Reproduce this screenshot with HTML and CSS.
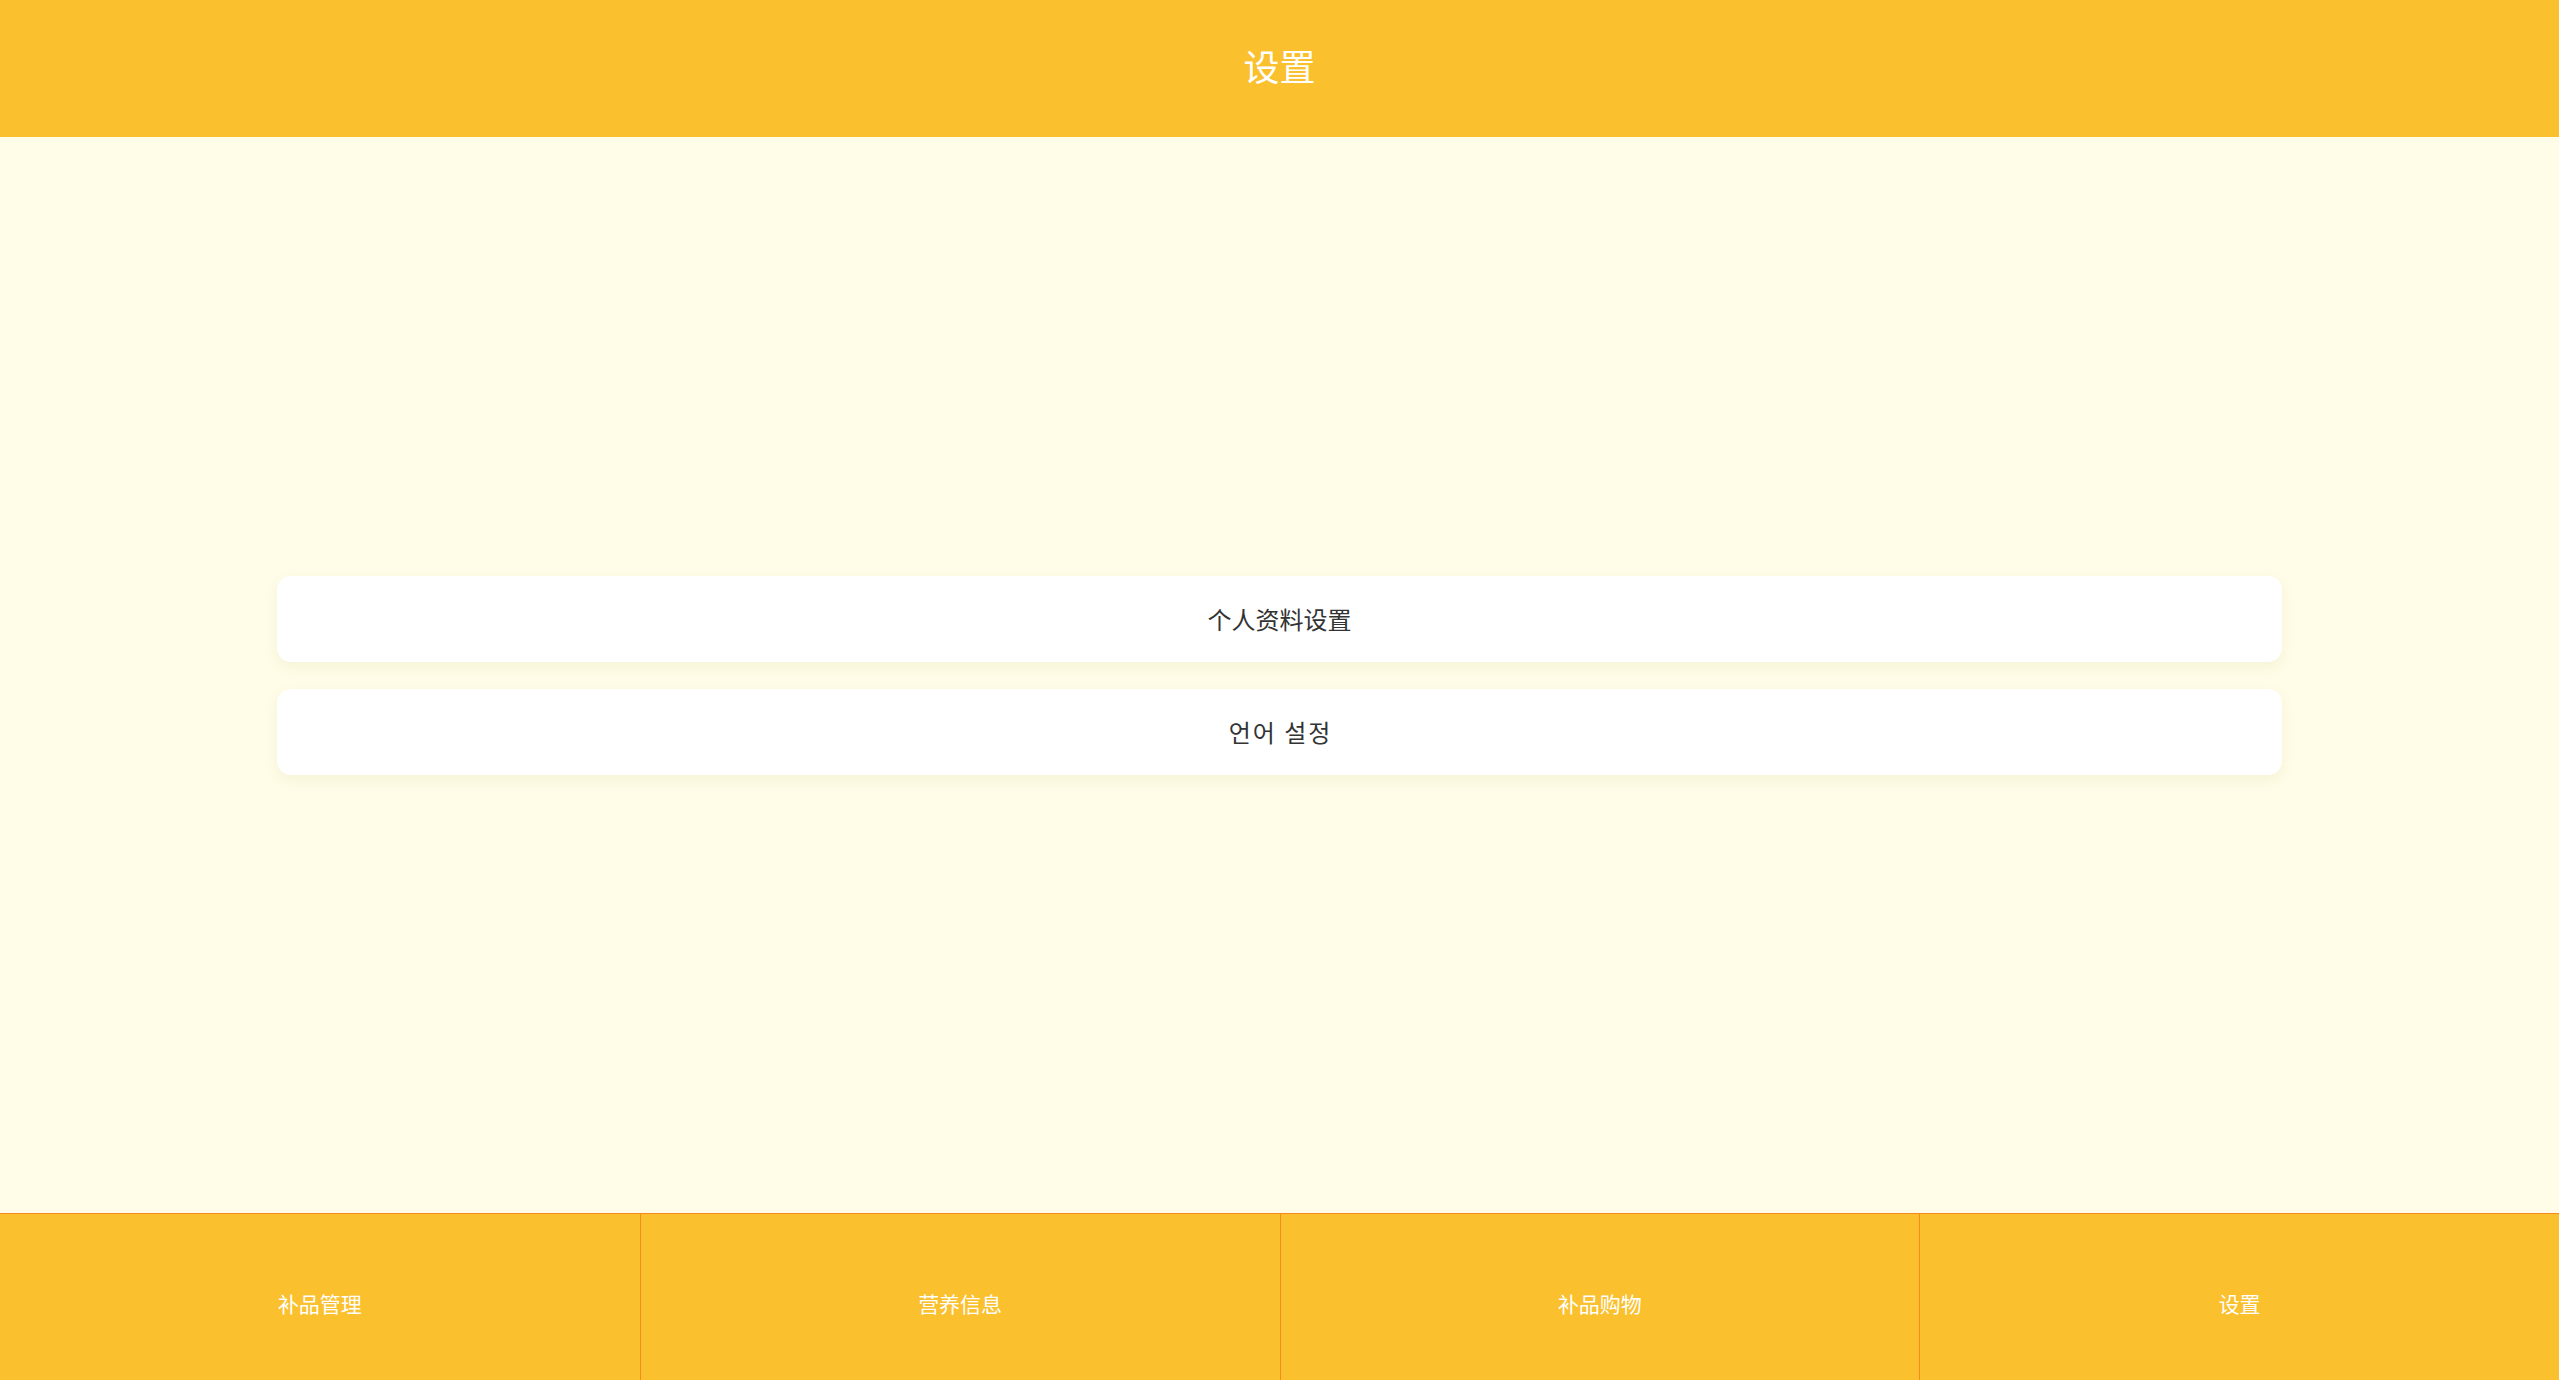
FILE: index.html
```html
<!DOCTYPE html>
<html lang="zh-CN">
<head>
<meta charset="utf-8">
<title>设置</title>
<link rel="stylesheet" href="styles.css">
</head>
<body>
<div class="app">
  <header class="topbar"><h1 class="title">设置</h1></header>
  <main class="content">
    <div class="list">
      <div class="card">个人资料设置</div>
      <div class="card card-kr">언어 설정</div>
    </div>
  </main>
  <nav class="tabbar">
    <div class="tab">补品管理</div>
    <div class="tab">营养信息</div>
    <div class="tab">补品购物</div>
    <div class="tab">设置</div>
  </nav>
</div>
</body>
</html>
```
FILE: styles.css
```css
html, body {
  margin: 0;
  padding: 0;
}
body {
  font-family: "Noto Sans CJK SC", "Noto Sans", sans-serif;
  background: #FFFDE7;
}
.app {
  height: 100vh;
  display: flex;
  flex-direction: column;
}
.topbar {
  height: 137px;
  flex: 0 0 137px;
  box-sizing: border-box;
  padding-bottom: 7px;
  background: #FBC02D;
  display: flex;
  align-items: center;
  justify-content: center;
}
.title {
  margin: 0;
  color: #fff;
  font-size: 36px;
  font-weight: 400;
  line-height: 1;
}
.content {
  flex: 1 1 auto;
  display: flex;
  align-items: center;
  justify-content: center;
}
.list {
  width: 2005px;
  display: flex;
  flex-direction: column;
  gap: 27px;
}
.card {
  height: 86px;
  background: #fff;
  border-radius: 14px;
  box-shadow: 0 5px 14px rgba(120, 110, 40, 0.08);
  display: flex;
  align-items: center;
  justify-content: center;
  font-size: 24px;
  color: #333;
}
.card-kr {
  font-family: "Noto Sans CJK KR", "Noto Sans CJK SC", sans-serif;
  letter-spacing: 2px;
  padding-left: 2px;
}
.tabbar {
  flex: 0 0 167px;
  height: 167px;
  background: #FBC02D;
  border-top: 1px solid #F58A1F;
  display: grid;
  grid-template-columns: repeat(4, 1fr);
  box-sizing: border-box;
}
.tab {
  color: #fff;
  font-size: 21px;
  line-height: 26px;
  text-align: center;
  padding-top: 76px;
  border-left: 1px solid #F58A1F;
}
.tab:first-child {
  border-left: none;
}
```
